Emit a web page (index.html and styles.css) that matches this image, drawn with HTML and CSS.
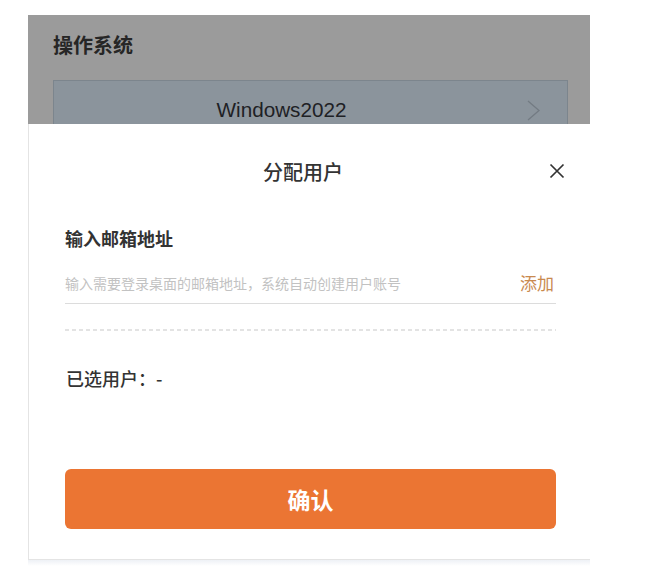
FILE: index.html
```html
<!DOCTYPE html>
<html lang="zh-CN">
<head>
<meta charset="utf-8">
<title>分配用户</title>
<link rel="stylesheet" href="styles.css">
</head>
<body>
<div class="frame">
  <div class="backdrop">
    <div class="section-title">操作系统</div>
    <div class="select">
      <span class="select-value">Windows2022</span>
      <svg class="chevron" width="13" height="21" viewBox="0 0 13 21"><polyline points="1,1 12,10.5 1,20" fill="none" stroke="#737b83" stroke-width="1.3"/></svg>
    </div>
  </div>
  <div class="sheet">
    <div class="sheet-header">
      <div class="sheet-title">分配用户</div>
      <svg class="close" width="16" height="16" viewBox="0 0 16 16"><path d="M1.5 1.5 L14.5 14.5 M14.5 1.5 L1.5 14.5" stroke="#333" stroke-width="1.7" fill="none"/></svg>
    </div>
    <div class="field-label">输入邮箱地址</div>
    <div class="input-row">
      <span class="placeholder">输入需要登录桌面的邮箱地址，系统自动创建用户账号</span>
      <span class="add">添加</span>
    </div>
    <div class="dashed"></div>
    <div class="selected">已选用户：-</div>
    <button class="confirm">确认</button>
  </div>
  <div class="shadow-band"></div>
</div>
</body>
</html>
```
FILE: styles.css
```css
html, body {
  margin: 0;
  padding: 0;
  background: #ffffff;
}
body {
  font-family: "Noto Sans CJK SC", "Noto Sans", sans-serif;
  color: #333;
}
.frame {
  margin: 15px 0 0 28px;
  width: 562px;
}
.backdrop {
  height: 109px;
  overflow: hidden;
  background: #9b9b9b;
  padding: 16px 22px 0 25px;
  box-sizing: border-box;
}
.section-title {
  font-size: 20px;
  line-height: 28px;
  font-weight: 700;
  color: #262626;
}
.select {
  margin-top: 21px;
  height: 60px;
  background: #8b949c;
  border: 1px solid #7c858d;
  box-sizing: border-box;
  display: flex;
  align-items: center;
  padding-right: 27px;
}
.select-value {
  flex: 1;
  text-align: center;
  font-family: "Liberation Sans", Arial, sans-serif;
  font-size: 20.7px;
  color: #1e2125;
  margin-right: 18px;
}
.chevron {
  display: block;
}
.sheet {
  background: #fff;
  border-left: 1px solid #e4e4e4;
  border-bottom: 1px solid #e4e4e4;
  padding: 36px 34px 30px 36px;
}
.sheet-header {
  display: flex;
  align-items: center;
  margin-right: -9px;
  height: 24px;
}
.sheet-title {
  flex: 1;
  text-align: center;
  font-size: 20px;
  line-height: 24px;
  font-weight: 500;
  color: #333;
  margin-right: 8px;
}
.close {
  display: block;
  margin-top: -3px;
}
.field-label {
  margin-top: 41px;
  font-size: 18px;
  line-height: 26px;
  font-weight: 700;
  color: #333;
}
.input-row {
  margin-top: 19px;
  display: flex;
  align-items: center;
  justify-content: space-between;
  height: 26px;
  padding-bottom: 7px;
  border-bottom: 1px solid #dcdcdc;
}
.placeholder {
  font-size: 14px;
  line-height: 26px;
  color: #c2c2c2;
}
.add {
  font-size: 17px;
  line-height: 26px;
  color: #c98a4f;
  margin-right: 2px;
}
.dashed {
  margin-top: 25px;
  height: 2px;
  background-image: repeating-linear-gradient(to right, #e3e3e3 0 4px, transparent 4px 7px);
}
.selected {
  margin-top: 34px;
  font-size: 18px;
  line-height: 26px;
  font-weight: 500;
  color: #333;
  padding-left: 1px;
}
.confirm {
  display: block;
  margin-top: 78px;
  width: 491px;
  height: 60px;
  border: none;
  border-radius: 6px;
  background: #eb7533;
  color: #fff;
  font-family: "Noto Sans CJK SC", "Noto Sans", sans-serif;
  font-size: 23px;
  font-weight: 700;
  padding: 0;
}
.shadow-band {
  height: 6px;
  background: linear-gradient(to bottom, #eef1f6, #ffffff);
}
```
